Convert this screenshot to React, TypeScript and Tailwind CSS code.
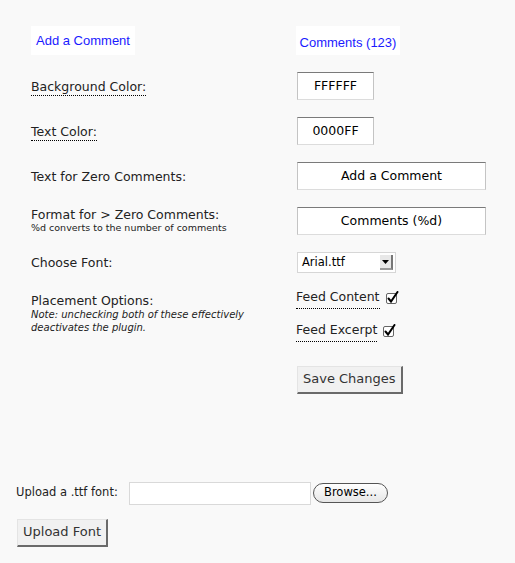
import React from 'react'

const font = "font-['DejaVu_Sans',Verdana,sans-serif]"

function Dotted({ children }: { children: React.ReactNode }) {
  return <span className="border-b border-dotted border-black pb-px">{children}</span>
}

function TextBox({ value, wide = false }: { value: string; wide?: boolean }) {
  return (
    <div
      className={`flex h-[28px] items-center justify-center border border-t-[#7a7a7a] border-r-[#c4c4c4] border-b-[#dcdcdc] border-l-[#c4c4c4] bg-white text-[12.5px] text-black ${wide ? 'w-[189px]' : 'w-[77px]'}`}
    >
      {value}
    </div>
  )
}

function Check() {
  return (
    <svg width="14" height="14" viewBox="0 0 14 14" className="ml-[5px]" aria-hidden="true">
      <rect x="1.5" y="2.5" width="10" height="10" rx="1.5" fill="#fff" stroke="#666" />
      <path d="M3.5 7.5 L6 10.5 L12.5 1" fill="none" stroke="#000" strokeWidth="2" strokeLinecap="round" />
    </svg>
  )
}

function GrayButton({ label }: { label: string }) {
  return (
    <button className="h-[28px] border border-t-[#e4e4e4] border-l-[#e4e4e4] border-r-2 border-b-2 border-r-[#6a6a6a] border-b-[#6a6a6a] bg-[#f1f1f1] px-[5px] text-[13px] text-[#333]">
      {label}
    </button>
  )
}

export default function App() {
  return (
    <div className={`min-h-[563px] w-[515px] bg-[#f9f9f9] text-[#222] ${font}`}>
      <div className="pl-[31px] pt-[26px]">
        <div className="flex">
          <div className="w-[265px]">
            <div className="flex h-[29px] w-[104px] items-center justify-center bg-white font-['Liberation_Sans',Arial,sans-serif] text-[13px] text-[#1a1aff]">
              Add a Comment
            </div>
          </div>
          <div className="flex h-[29px] w-[104px] items-center justify-center bg-white pt-[4px] font-['Liberation_Sans',Arial,sans-serif] text-[13px] text-[#1a1aff]">
            Comments (123)
          </div>
        </div>

        <div className="mt-[17px] flex flex-col gap-[17px] text-[12.5px]">
          <div className="flex items-center">
            <div className="w-[266px] pt-[2px]"><Dotted>Background Color:</Dotted></div>
            <TextBox value="FFFFFF" />
          </div>
          <div className="flex items-center">
            <div className="w-[266px] pt-[2px]"><Dotted>Text Color:</Dotted></div>
            <TextBox value="0000FF" />
          </div>
          <div className="flex items-center">
            <div className="w-[266px] pt-[2px]">Text for Zero Comments:</div>
            <TextBox value="Add a Comment" wide />
          </div>
          <div className="flex items-center">
            <div className="w-[266px] leading-[14px]">
              <div>Format for &gt; Zero Comments:</div>
              <div className="text-[9.5px] leading-[12px]">%d converts to the number of comments</div>
            </div>
            <TextBox value="Comments (%d)" wide />
          </div>
        </div>

        <div className="mt-[17px] flex items-center">
          <div className="w-[266px] pt-[2px] text-[12.5px]">Choose Font:</div>
          <div className="flex h-[21px] w-[99px] items-center justify-between border border-[#d6d6d6] bg-white pl-[4px] pr-[2px] text-[11.5px] text-black">
            <span>Arial.ttf</span>
            <span className="flex h-[15px] w-[13px] items-center justify-center border-r-2 border-b-2 border-r-[#777] border-b-[#999] bg-[#e8e8e8]">
              <svg width="7" height="4" viewBox="0 0 7 4"><path d="M0 0 L7 0 L3.5 4 Z" fill="#000" /></svg>
            </span>
          </div>
        </div>

        <div className="mt-[15px] flex">
          <div className="w-[266px] pt-[5px]">
            <div className="text-[12.5px] leading-[15px]">Placement Options:</div>
            <div className="text-[10px] italic leading-[13px]">
              Note: unchecking both of these effectively
              <br />
              deactivates the plugin.
            </div>
          </div>
          <div className="-ml-px text-[12.5px]">
            <div className="flex items-center">
              <Dotted>Feed Content</Dotted>
              <Check />
            </div>
            <div className="mt-[12px] flex items-center">
              <Dotted>Feed Excerpt</Dotted>
              <Check />
            </div>
          </div>
        </div>

        <div className="mt-[24px] pl-[266px]">
          <GrayButton label="Save Changes" />
        </div>
      </div>

      <div className="mt-[88px] pl-[16px]">
        <div className="flex items-center text-[11.5px]">
          <span className="w-[113px]">Upload a .ttf font:</span>
          <div className="h-[23px] w-[182px] border border-[#d9d9d9] bg-white" />
          <button className="ml-[2px] h-[20px] rounded-full border border-[#555] bg-gradient-to-b from-white to-[#e6e6e6] px-[10px] text-[11.5px] leading-none text-black">
            Browse...
          </button>
        </div>
        <div className="mt-[14px] pl-px">
          <GrayButton label="Upload Font" />
        </div>
      </div>
    </div>
  )
}
